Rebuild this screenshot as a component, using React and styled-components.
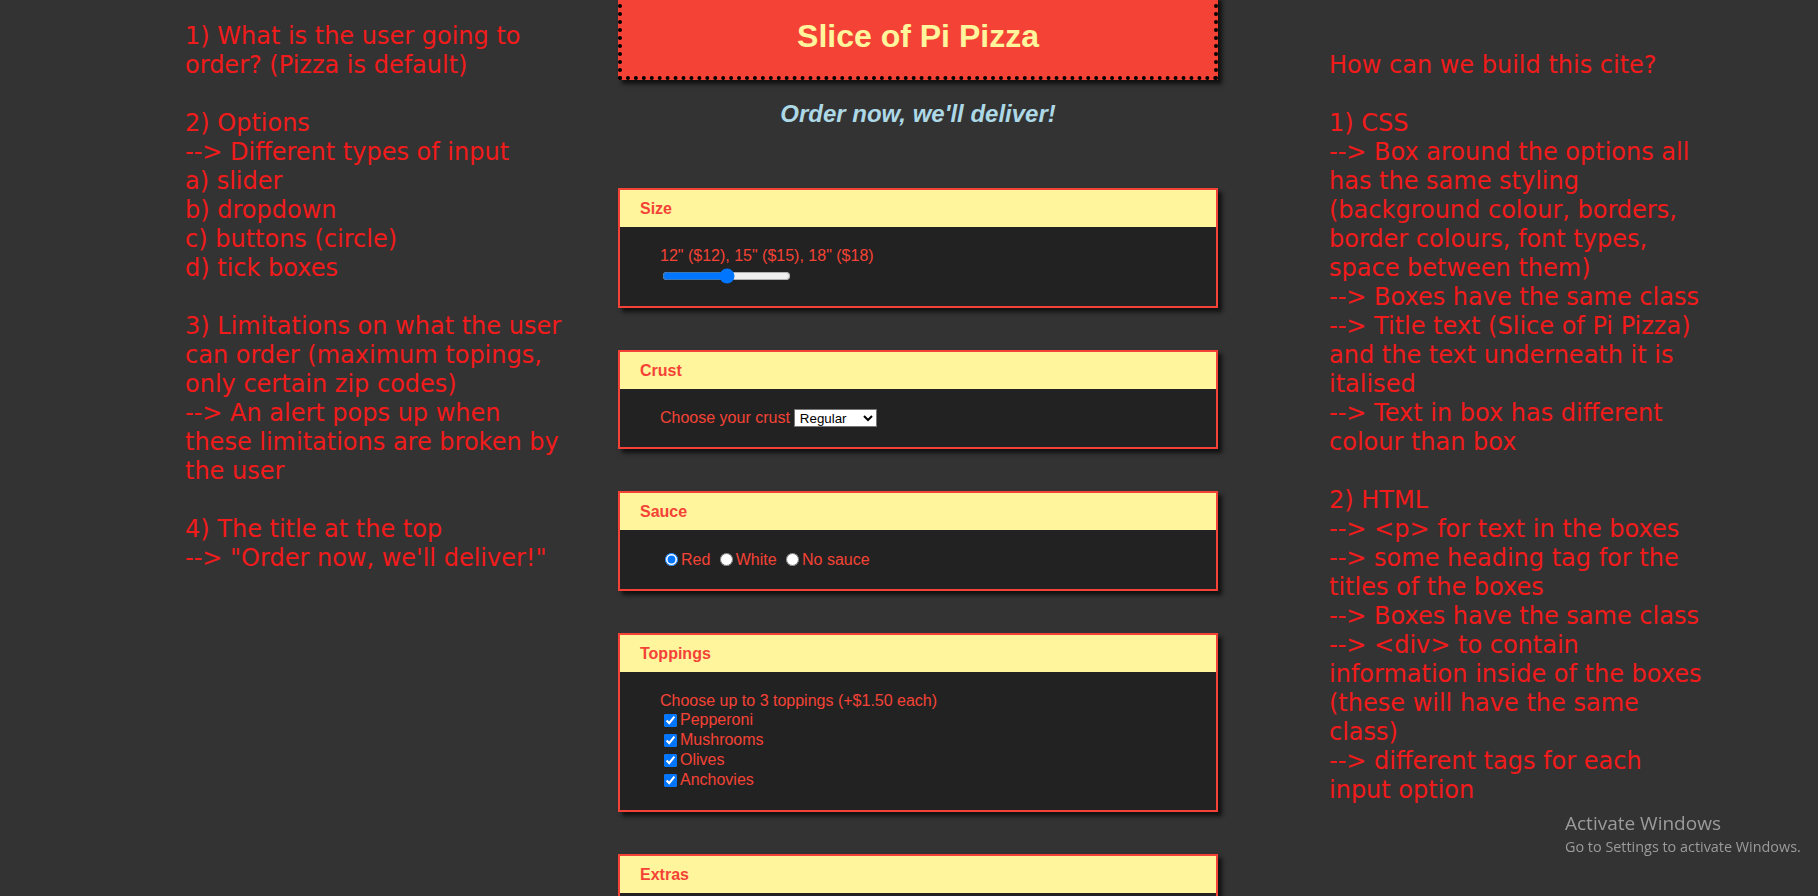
import React from 'react';
import styled, { createGlobalStyle } from 'styled-components';

const GlobalStyle = createGlobalStyle`
    html, body {
        margin: 0;
        padding: 0;
        background: #333333;
        overflow: hidden;
    }

    body {
        font-family: "Liberation Sans", Arial, sans-serif;
    }
`;

const Page = styled.div`
    display: flex;
    align-items: flex-start;
    padding-left: 185px;
    min-height: 896px;
`;

const Notes = styled.div`
    flex: none;
    width: ${props => props.width}px;
    padding-top: ${props => props.top}px;
    margin-left: ${props => props.offset || 0}px;
    font-family: "DejaVu Sans", Verdana, sans-serif;
    font-size: 24px;
    color: #f11b1b;
    white-space: nowrap;
`;

const NoteLine = styled.div`
    height: 29px;
    line-height: 29px;
`;

const Column = styled.main`
    flex: none;
    width: 600px;
    margin-left: 51px;
`;

const Banner = styled.header`
    margin-top: -4px;
    background: #f44336;
    border: 4px dotted #000000;
    box-shadow: 4px 4px 4px #111111;
    text-align: center;

    h1 {
        margin: 0;
        padding: 18px 0 21px;
        font-size: 32px;
        font-weight: bold;
        color: #fff59d;
    }
`;

const Tagline = styled.h2`
    margin: 20px 0 0;
    text-align: center;
    font-size: 24px;
    font-style: italic;
    font-weight: bold;
    color: #add8e6;
`;

const Options = styled.section`
    display: flex;
    flex-direction: column;
    gap: 42px;
    margin-top: 60px;
`;

const OptionBox = styled.div`
    border: 2px solid #f44336;
    background: #222222;
    box-shadow: 4px 4px 4px #111111;
    color: #f44336;
    font-size: 16px;
`;

const OptionTitle = styled.h3`
    display: flex;
    align-items: center;
    height: 37px;
    margin: 0;
    padding: 0 20px;
    background: #fff59d;
    font-size: 16px;
    font-weight: bold;
    color: #f44336;
`;

const OptionBody = styled.div`
    min-height: 18px;
    padding: 20px 40px;
`;

const Row = styled.div`
    display: flex;
    align-items: center;
    height: ${props => props.h || 18}px;
    white-space: nowrap;
`;

const Slider = styled.input`
    width: 129px;
    margin: 0 0 0 2px;
`;

const Select = styled.select`
    width: 83px;
    height: 18px;
    margin-left: 4px;
    padding: 0 0 0 1px;
    border: 1px solid #767676;
    border-radius: 0;
    background: #ffffff;
    color: #000000;
    font-family: "Liberation Sans", Arial, sans-serif;
    font-size: 13.33px;
`;

const Choice = styled.label`
    display: inline-flex;
    align-items: center;
    margin-right: 4.4px;

    input {
        width: 13px;
        height: 13px;
        margin: 0 3px 0 ${props => props.lead || 5}px;
    }
`;

const Watermark = styled.div`
    position: fixed;
    left: 1565px;
    top: 811px;
    font-family: "Open Sans", "Noto Sans", sans-serif;
    color: #9b9b9b;

    p {
        margin: 0;
        font-size: 19px;
        line-height: 24px;
    }

    small {
        display: block;
        margin-top: 2px;
        font-size: 14.4px;
        line-height: 20px;
    }
`;

const leftNotes = [
    '1) What is the user going to',
    'order? (Pizza is default)',
    '',
    '2) Options',
    '--> Different types of input',
    'a) slider',
    'b) dropdown',
    'c) buttons (circle)',
    'd) tick boxes',
    '',
    '3) Limitations on what the user',
    'can order (maximum topings,',
    'only certain zip codes)',
    '--> An alert pops up when',
    'these limitations are broken by',
    'the user',
    '',
    '4) The title at the top',
    '--> "Order now, we\'ll deliver!"',
];

const rightNotes = [
    'How can we build this cite?',
    '',
    '1) CSS',
    '--> Box around the options all',
    'has the same styling',
    '(background colour, borders,',
    'border colours, font types,',
    'space between them)',
    '--> Boxes have the same class',
    '--> Title text (Slice of Pi Pizza)',
    'and the text underneath it is',
    'italised',
    '--> Text in box has different',
    'colour than box',
    '',
    '2) HTML',
    '--> <p> for text in the boxes',
    '--> some heading tag for the',
    'titles of the boxes',
    '--> Boxes have the same class',
    '--> <div> to contain',
    'information inside of the boxes',
    '(these will have the same',
    'class)',
    '--> different tags for each',
    'input option',
];

const toppings = ['Pepperoni', 'Mushrooms', 'Olives', 'Anchovies'];

const App = () => {
    return (
        <>
            <GlobalStyle />
            <Page>
                <Notes width={382} top={22}>
                    {leftNotes.map((line, i) => <NoteLine key={i}>{line}</NoteLine>)}
                </Notes>

                <Column>
                    <Banner>
                        <h1>Slice of Pi Pizza</h1>
                    </Banner>
                    <Tagline>Order now, we'll deliver!</Tagline>

                    <Options>
                        <OptionBox>
                            <OptionTitle>Size</OptionTitle>
                            <OptionBody>
                                <Row>12" ($12), 15" ($15), 18" ($18)</Row>
                                <Row h={21}>
                                    <Slider type="range" min="12" max="18" step="3" defaultValue="15" />
                                </Row>
                            </OptionBody>
                        </OptionBox>

                        <OptionBox>
                            <OptionTitle>Crust</OptionTitle>
                            <OptionBody>
                                <Row>
                                    Choose your crust
                                    <Select defaultValue="regular">
                                        <option value="regular">Regular</option>
                                        <option value="thin">Thin</option>
                                        <option value="deep">Deep dish</option>
                                    </Select>
                                </Row>
                            </OptionBody>
                        </OptionBox>

                        <OptionBox>
                            <OptionTitle>Sauce</OptionTitle>
                            <OptionBody>
                                <Row h={19}>
                                    <Choice><input type="radio" name="sauce" defaultChecked />Red</Choice>
                                    <Choice><input type="radio" name="sauce" />White</Choice>
                                    <Choice><input type="radio" name="sauce" />No sauce</Choice>
                                </Row>
                            </OptionBody>
                        </OptionBox>

                        <OptionBox>
                            <OptionTitle>Toppings</OptionTitle>
                            <OptionBody>
                                <Row>Choose up to 3 toppings (+$1.50 each)</Row>
                                {toppings.map(name => (
                                    <Row h={20} key={name}>
                                        <Choice lead={4}><input type="checkbox" defaultChecked />{name}</Choice>
                                    </Row>
                                ))}
                            </OptionBody>
                        </OptionBox>

                        <OptionBox>
                            <OptionTitle>Extras</OptionTitle>
                            <OptionBody />
                        </OptionBox>
                    </Options>
                </Column>

                <Notes width={378} top={51} offset={111}>
                    {rightNotes.map((line, i) => <NoteLine key={i}>{line}</NoteLine>)}
                </Notes>
            </Page>

            <Watermark>
                <p>Activate Windows</p>
                <small>Go to Settings to activate Windows.</small>
            </Watermark>
        </>
    );
};

export default App;
